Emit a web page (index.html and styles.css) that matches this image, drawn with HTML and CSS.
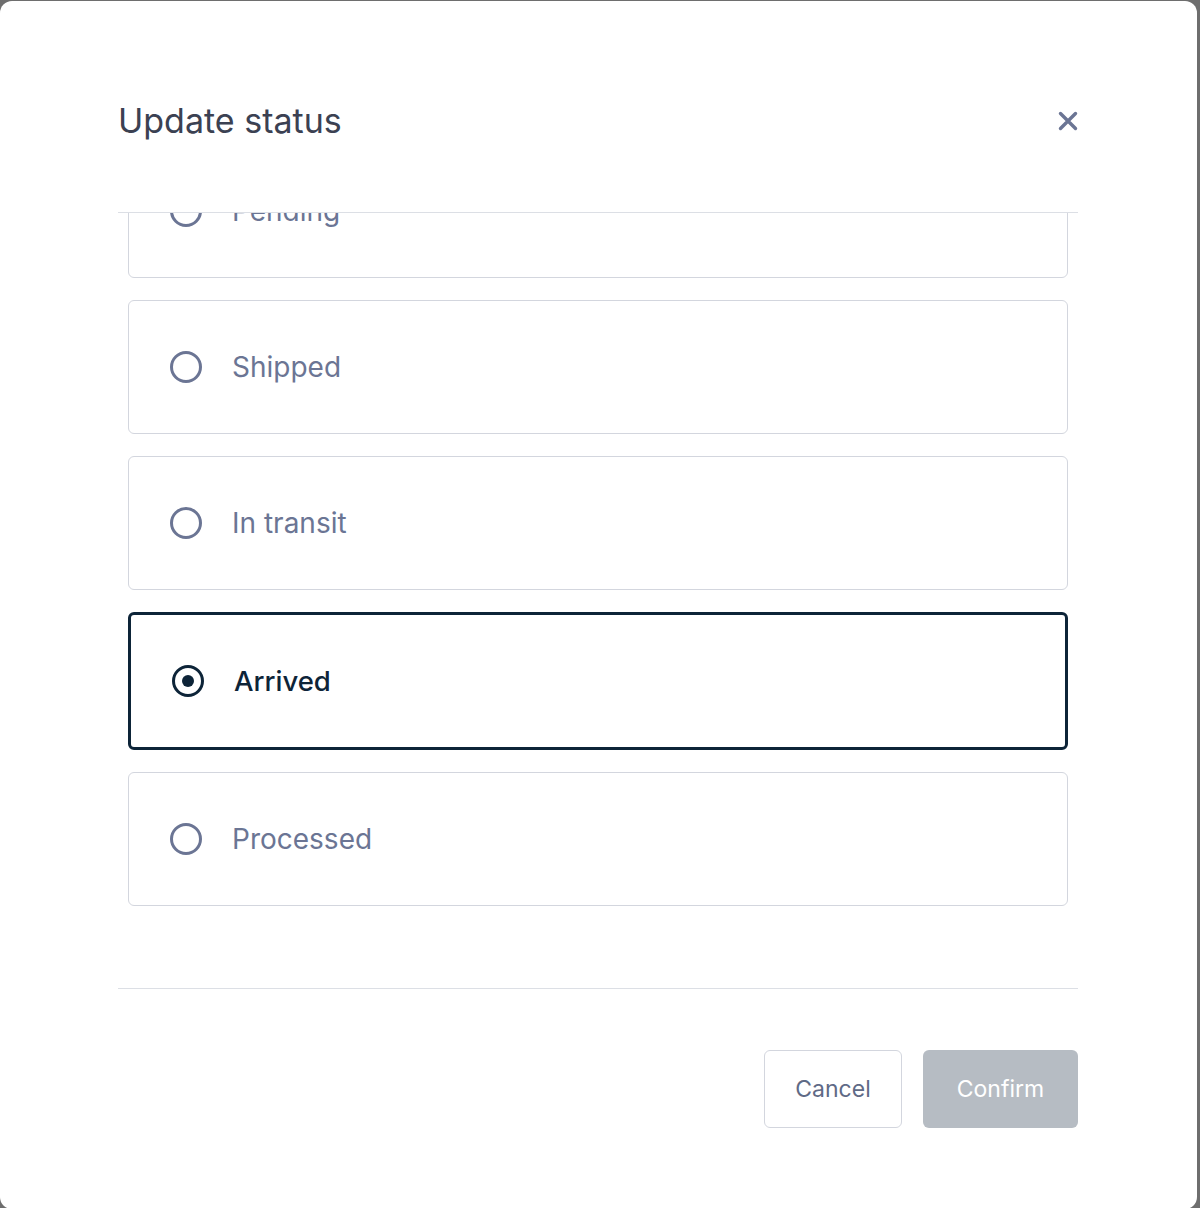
FILE: index.html
```html
<!DOCTYPE html>
<html lang="en">
<head>
<meta charset="utf-8">
<title>Update status</title>
<link rel="stylesheet" href="styles.css">
</head>
<body>
<div class="modal">
  <div class="modal-header">
    <h2 class="modal-title">Update status</h2>
    <button class="close-btn" aria-label="Close">
      <svg width="20" height="20" viewBox="0 0 20 20"><path d="M2.5 2.5 L17.5 17.5 M17.5 2.5 L2.5 17.5" stroke="#6b7594" stroke-width="3.4" stroke-linecap="round" fill="none"/></svg>
    </button>
  </div>
  <div class="options-viewport">
    <div class="options">
      <label class="option"><span class="radio"></span><span class="option-label">Pending</span></label>
      <label class="option"><span class="radio"></span><span class="option-label">Shipped</span></label>
      <label class="option"><span class="radio"></span><span class="option-label">In transit</span></label>
      <label class="option selected"><span class="radio"></span><span class="option-label">Arrived</span></label>
      <label class="option"><span class="radio"></span><span class="option-label">Processed</span></label>
    </div>
  </div>
  <div class="modal-footer">
    <button class="btn btn-cancel">Cancel</button>
    <button class="btn btn-confirm">Confirm</button>
  </div>
</div>
</body>
</html>
```

FILE: styles.css
```css
html, body {
  margin: 0;
  padding: 0;
  height: 100%;
  overflow: hidden;
}
body {
  background: #6e6e6e;
  font-family: Inter, "Noto Sans", sans-serif;
}
.modal {
  box-sizing: border-box;
  margin-top: 1px;
  width: 1197px;
  height: 1208px;
  background: #ffffff;
  border-radius: 12px;
  padding: 0 119px 0 118px;
  display: flex;
  flex-direction: column;
}
.modal-header {
  display: flex;
  align-items: center;
  justify-content: space-between;
  padding-top: 100px;
  height: 40px;
  margin-bottom: 71px;
}
.modal-title {
  margin: 0;
  font-size: 34px;
  line-height: 40px;
  font-weight: 400;
  color: #3b4152;
}
.close-btn {
  border: 0;
  background: none;
  padding: 0;
  width: 20px;
  height: 20px;
  display: flex;
  align-items: center;
  justify-content: center;
}
.options-viewport {
  border-top: 1px solid #dcdfe5;
  border-bottom: 1px solid #dcdfe5;
  height: 775px;
  overflow: hidden;
}
.options {
  margin: -69px 10px 0;
  display: flex;
  flex-direction: column;
  gap: 22px;
}
.option {
  box-sizing: border-box;
  height: 134px;
  border: 1px solid #d3d6de;
  border-radius: 6px;
  display: flex;
  align-items: center;
  padding-left: 41px;
  gap: 30px;
  color: #6b7594;
}
.radio {
  box-sizing: border-box;
  width: 32px;
  height: 32px;
  border: 3px solid #6b7594;
  border-radius: 50%;
  display: flex;
  align-items: center;
  justify-content: center;
  flex: none;
}
.option-label {
  font-size: 28px;
  line-height: 34px;
}
.option.selected {
  height: 138px;
  border: 3px solid #0d2438;
  color: #0d2438;
}
.option.selected .option-label {
  font-weight: 500;
  font-size: 27.5px;
}
.option.selected .radio {
  border-color: #0d2438;
}
.option.selected .radio::after {
  content: "";
  width: 12px;
  height: 12px;
  border-radius: 50%;
  background: #0d2438;
}
.modal-footer {
  display: flex;
  justify-content: flex-end;
  gap: 21px;
  padding-top: 61px;
}
.btn {
  box-sizing: border-box;
  height: 78px;
  border-radius: 6px;
  font-family: Inter, "Noto Sans", sans-serif;
  font-size: 23px;
}
.btn-cancel {
  width: 138px;
  background: #ffffff;
  border: 1.5px solid #d3d6de;
  color: #5f6a86;
}
.btn-confirm {
  width: 155px;
  background: #b6bcc3;
  border: 0;
  color: #ffffff;
}
```
